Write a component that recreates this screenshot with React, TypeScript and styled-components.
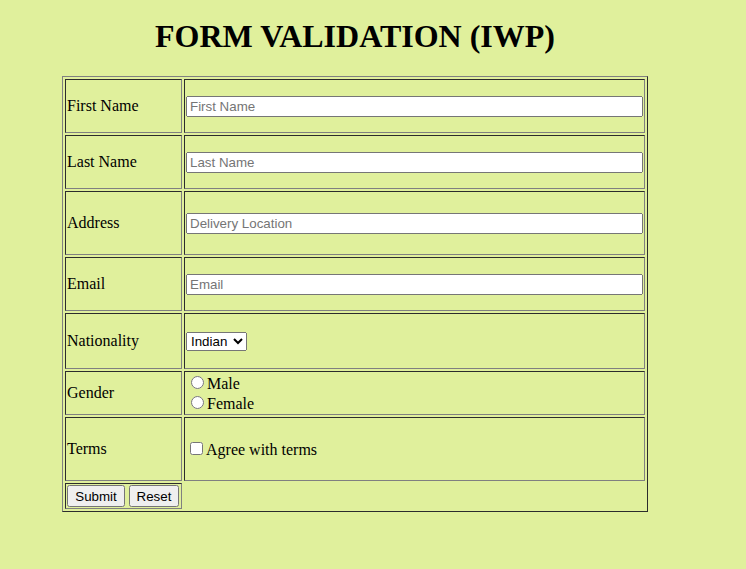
import React from "react";
import styled, { createGlobalStyle } from "styled-components";

const Global = createGlobalStyle`
  html, body {
    background: #e0f09c;
  }
  body {
    margin: 8px;
    font-family: "Liberation Serif", "Times New Roman", serif;
    font-size: 16px;
    color: #000;
  }
`;

const Wrapper = styled.div`
  width: 586px;
  margin-left: 54px;
`;

const Title = styled.h1`
  font-family: "Liberation Serif", "Times New Roman", serif;
  font-size: 32px;
  font-weight: bold;
  text-align: center;
  margin: 10px 0 21px;
`;

const Table = styled.table`
  width: 586px;
  border: 1px outset grey;
  border-spacing: 2px;
  border-collapse: separate;
`;

const Cell = styled.td<{ $h?: number; $w?: number }>`
  border: 1px inset grey;
  padding: 1px;
  vertical-align: middle;
  ${(p) => (p.$h ? `height: ${p.$h}px;` : "")}
  ${(p) => (p.$w ? `width: ${p.$w}px;` : "")}
`;

const ButtonCell = styled.td`
  border: 1px inset grey;
  padding: 1px;
  white-space: nowrap;
  line-height: 0;
`;

const TextInput = styled.input`
  box-sizing: border-box;
  width: 100%;
  font-family: "Liberation Sans", Arial, sans-serif;
  font-size: 13.333px;
  margin: 0;
`;

const Select = styled.select`
  font-family: "Liberation Sans", Arial, sans-serif;
  font-size: 13.333px;
  margin: 0;
  padding-right: 2px;
`;

const Btn = styled.button<{ $w: number }>`
  box-sizing: border-box;
  font-family: "Liberation Sans", Arial, sans-serif;
  font-size: 13.333px;
  line-height: normal;
  margin: 0;
  padding: 1px 0;
  height: 22px;
  width: ${(p) => p.$w}px;
  vertical-align: top;
  & + & {
    margin-left: 4px;
  }
`;

const Option = styled.label`
  display: block;
`;

type Row = { label: string; h: number; placeholder: string };

const textRows: Row[] = [
  { label: "First Name", h: 50, placeholder: "First Name" },
  { label: "Last Name", h: 50, placeholder: "Last Name" },
  { label: "Address", h: 60, placeholder: "Delivery Location" },
  { label: "Email", h: 50, placeholder: "Email" },
];

export default function App() {
  return (
    <>
      <Global />
      <Wrapper>
        <Title>FORM VALIDATION (IWP)</Title>
        <form onSubmit={(e) => e.preventDefault()}>
          <Table>
            <tbody>
              {textRows.map((r, i) => (
                <tr key={r.label}>
                  <Cell $h={r.h} $w={i === 0 ? 113 : undefined}>
                    {r.label}
                  </Cell>
                  <Cell>
                    <TextInput type="text" placeholder={r.placeholder} />
                  </Cell>
                </tr>
              ))}
              <tr>
                <Cell $h={52}>Nationality</Cell>
                <Cell>
                  <Select defaultValue="Indian">
                    <option>Indian</option>
                    <option>Other</option>
                  </Select>
                </Cell>
              </tr>
              <tr>
                <Cell>Gender</Cell>
                <Cell>
                  <Option>
                    <input type="radio" name="gender" />
                    Male
                  </Option>
                  <Option>
                    <input type="radio" name="gender" />
                    Female
                  </Option>
                </Cell>
              </tr>
              <tr>
                <Cell $h={60}>Terms</Cell>
                <Cell>
                  <label>
                    <input type="checkbox" />
                    Agree with terms
                  </label>
                </Cell>
              </tr>
              <tr>
                <ButtonCell>
                  <Btn type="submit" $w={58}>Submit</Btn>
                  <Btn type="reset" $w={50}>Reset</Btn>
                </ButtonCell>
              </tr>
            </tbody>
          </Table>
        </form>
      </Wrapper>
    </>
  );
}
